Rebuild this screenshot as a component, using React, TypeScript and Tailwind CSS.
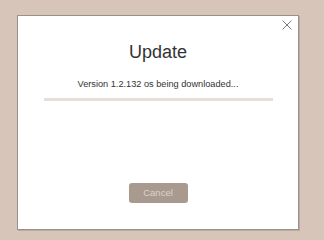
import React from "react";

export default function App() {
  return (
    <div
      className="w-[324px] h-[240px] bg-[#d8c5b9] pt-[15px] pl-[17px]"
      style={{ fontFamily: '"Liberation Sans", Arial, sans-serif' }}
    >
      <div className="relative w-[282px] h-[215px] bg-white border border-[#9a918b] shadow-[1px_1px_0_#b8aaa0] flex flex-col items-center">
        <button className="absolute right-[6px] top-[4px] w-[10px] h-[10px] flex items-center justify-center">
          <svg width="10" height="10" viewBox="0 0 10 10">
            <path d="M0.5 0.5 L9.5 9.5 M9.5 0.5 L0.5 9.5" stroke="#7a7a7a" strokeWidth="1" fill="none" />
          </svg>
        </button>
        <div className="mt-[26px] text-[18px] leading-[20px] text-[#333333]">Update</div>
        <div className="mt-[16px] text-[9.2px] leading-[13px] text-[#333333]">
          Version 1.2.132 os being downloaded...
        </div>
        <div className="mt-[7px] w-[229px] h-[3px] bg-[#e6dfd9]" />
        <button className="mt-[82px] w-[59px] h-[20px] rounded-[3px] bg-[#a99a8f] text-[9.5px] text-[#dcd2cb] flex items-center justify-center">
          Cancel
        </button>
      </div>
    </div>
  );
}
